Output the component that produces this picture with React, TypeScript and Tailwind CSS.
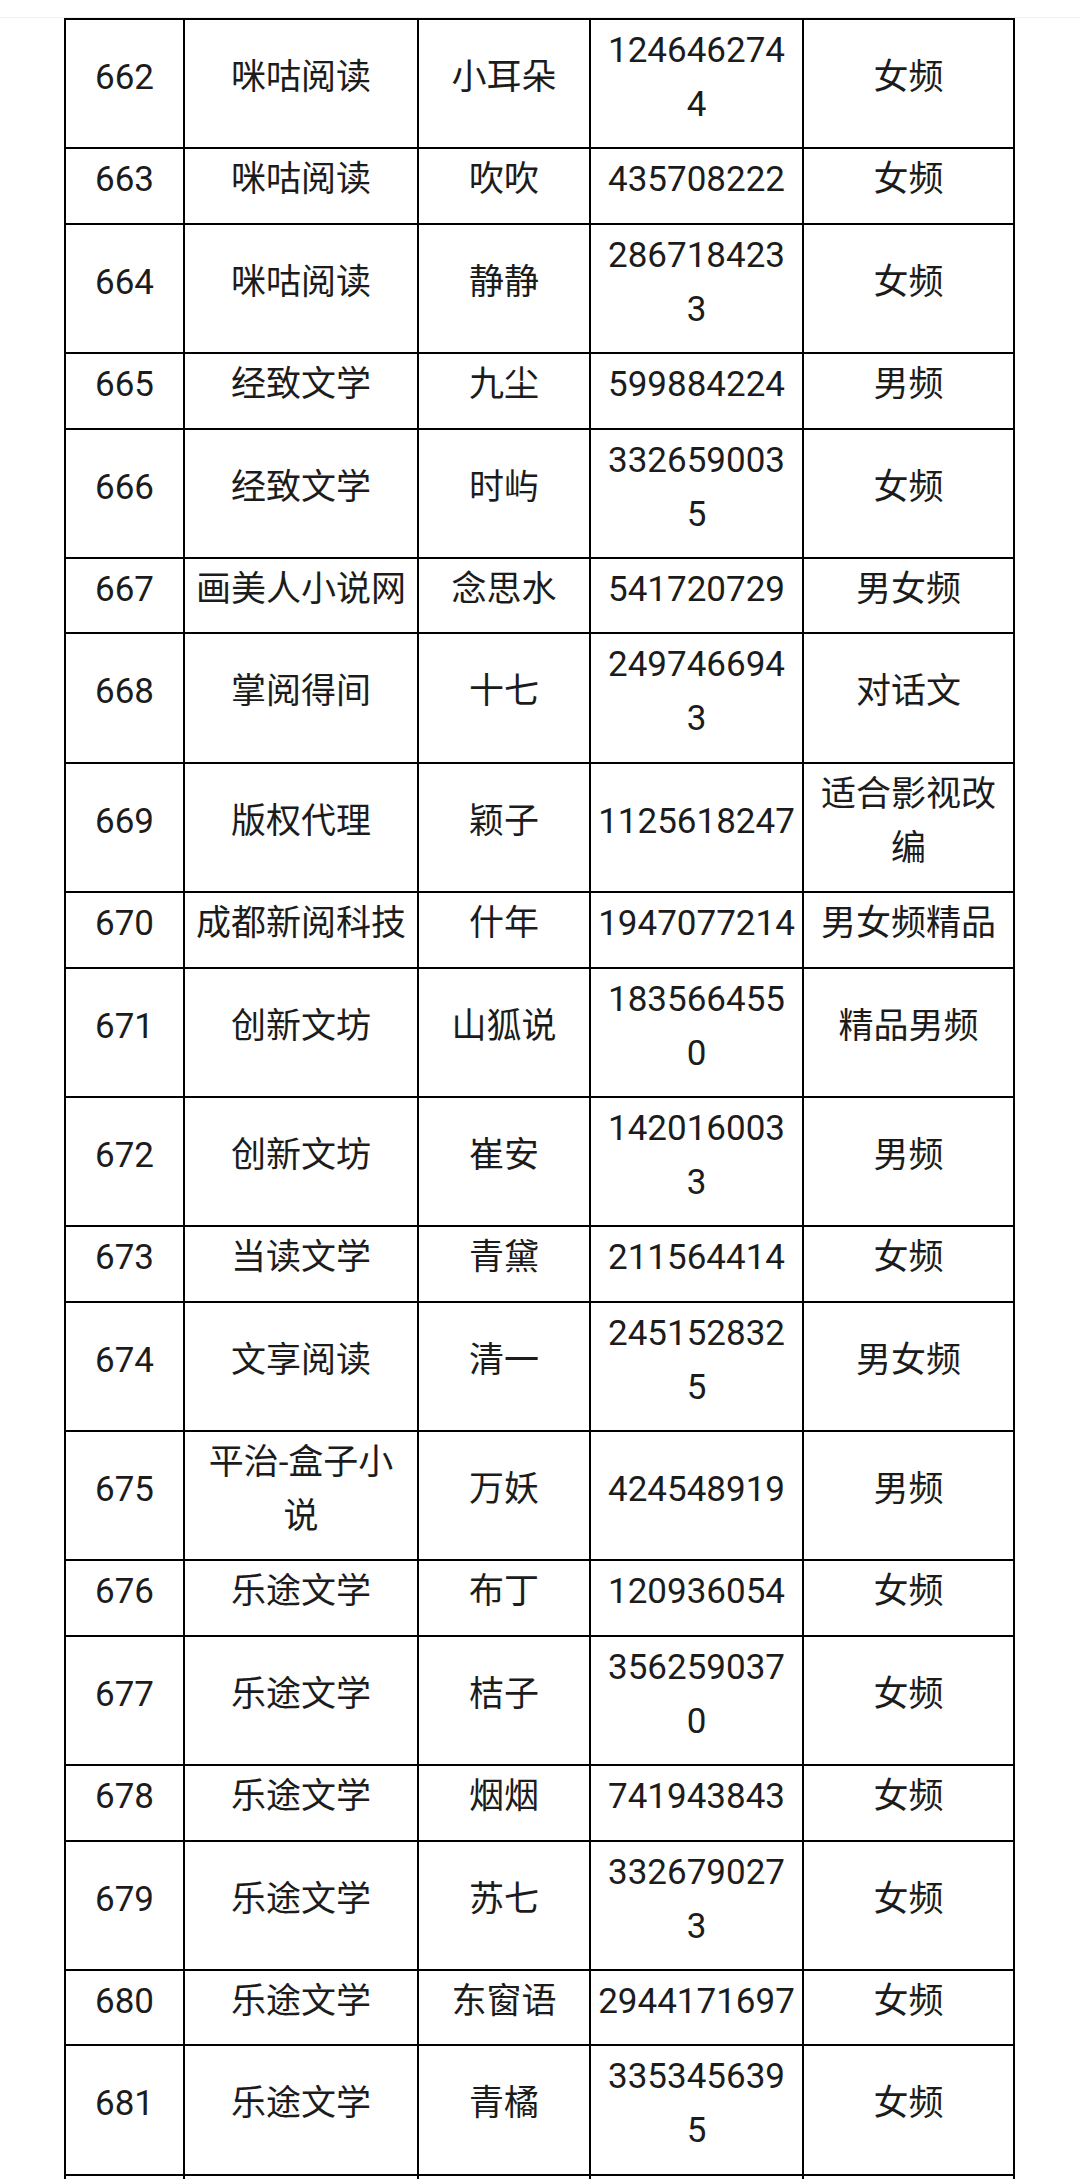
import React from "react";

type Row = [string, string[], string[], string[], string[]];

const rows: Row[] = [
  ["662", ["咪咕阅读"], ["小耳朵"], ["124646274", "4"], ["女频"]],
  ["663", ["咪咕阅读"], ["吹吹"], ["435708222"], ["女频"]],
  ["664", ["咪咕阅读"], ["静静"], ["286718423", "3"], ["女频"]],
  ["665", ["经致文学"], ["九尘"], ["599884224"], ["男频"]],
  ["666", ["经致文学"], ["时屿"], ["332659003", "5"], ["女频"]],
  ["667", ["画美人小说网"], ["念思水"], ["541720729"], ["男女频"]],
  ["668", ["掌阅得间"], ["十七"], ["249746694", "3"], ["对话文"]],
  ["669", ["版权代理"], ["颖子"], ["1125618247"], ["适合影视改", "编"]],
  ["670", ["成都新阅科技"], ["什年"], ["1947077214"], ["男女频精品"]],
  ["671", ["创新文坊"], ["山狐说"], ["183566455", "0"], ["精品男频"]],
  ["672", ["创新文坊"], ["崔安"], ["142016003", "3"], ["男频"]],
  ["673", ["当读文学"], ["青黛"], ["211564414"], ["女频"]],
  ["674", ["文享阅读"], ["清一"], ["245152832", "5"], ["男女频"]],
  ["675", ["平治-盒子小", "说"], ["万妖"], ["424548919"], ["男频"]],
  ["676", ["乐途文学"], ["布丁"], ["120936054"], ["女频"]],
  ["677", ["乐途文学"], ["桔子"], ["356259037", "0"], ["女频"]],
  ["678", ["乐途文学"], ["烟烟"], ["741943843"], ["女频"]],
  ["679", ["乐途文学"], ["苏七"], ["332679027", "3"], ["女频"]],
  ["680", ["乐途文学"], ["东窗语"], ["2944171697"], ["女频"]],
  ["681", ["乐途文学"], ["青橘"], ["335345639", "5"], ["女频"]],
];

function Cell({ lines }: { lines: string[] }) {
  return (
    <div className="flex items-center justify-center border-r-2 border-b-2 border-black pt-[4px] pb-[15.4px] text-center">
      <div className="flex flex-col items-center whitespace-nowrap leading-[54px]">
        {lines.map((l, i) => (
          <span key={i}>{l}</span>
        ))}
      </div>
    </div>
  );
}

export default function App() {
  return (
    <div
      className="h-[2179px] w-[1080px] overflow-hidden bg-white text-[35px] text-[#1c1c1c]"
      style={{ fontFamily: "Roboto, 'Noto Sans CJK SC', sans-serif" }}
    >
      <div className="h-[18px] border-b border-[#f1f1f1]" />
      <div className="ml-[64px] grid w-[951px] grid-cols-[119px_234px_172px_213px_211px] border-l-2 border-black">
        {[0, 1, 2, 3, 4].map((i) => (
          <div key={"top" + i} className="h-[1px] border-r-2 border-b-2 border-black" />
        ))}
        {rows.map((r) => (
          <React.Fragment key={r[0]}>
            <Cell lines={[r[0]]} />
            <Cell lines={r[1]} />
            <Cell lines={r[2]} />
            <Cell lines={r[3]} />
            <Cell lines={r[4]} />
          </React.Fragment>
        ))}
        {[0, 1, 2, 3, 4].map((i) => (
          <div key={"bot" + i} className="h-[40px] border-r-2 border-black" />
        ))}
      </div>
    </div>
  );
}
